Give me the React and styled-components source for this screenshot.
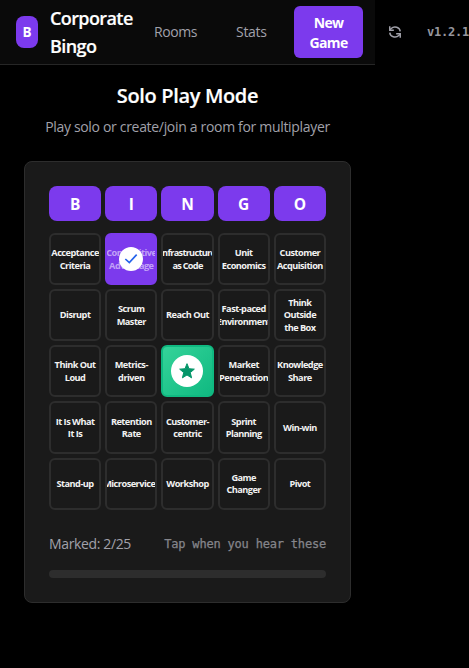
import React from 'react';
import styled, { createGlobalStyle, css } from 'styled-components';

const GlobalStyle = createGlobalStyle`
  *, *::before, *::after { box-sizing: border-box; }
  body {
    margin: 0;
    background: #000;
    color: #fff;
    font-family: "Open Sans", "Noto Sans", sans-serif;
    overflow: hidden;
  }
  button { font: inherit; color: inherit; border: 0; padding: 0; margin: 0; cursor: pointer; }
  h1, p { margin: 0; }
`;

const Page = styled.div`
  width: 375px;
  min-height: 668px;
  background: #000;
`;

const Header = styled.header`
  width: 375px;
  height: 65px;
  padding-left: 16px;
  background: #0a0a0a;
  border-bottom: 1px solid #262626;
`;

const HeaderRow = styled.div`
  display: flex;
  align-items: center;
  width: 453px;
  height: 64px;
`;

const Logo = styled.div`
  display: flex;
  align-items: center;
  justify-content: center;
  flex: none;
  width: 22px;
  height: 32px;
  margin-right: 12px;
  border-radius: 8px;
  background: #7c3aed;
  font-size: 13.5px;
  font-weight: 700;
`;

const Brand = styled.span`
  flex: none;
  width: 88px;
  font-size: 18px;
  line-height: 28px;
  font-weight: 600;
  letter-spacing: -0.6px;
  -webkit-text-stroke: 0.2px #fff;
`;

const Nav = styled.nav`
  display: flex;
  align-items: center;
  flex: none;
`;

const NavLink = styled.span`
  width: ${({ $width }) => $width}px;
  padding-left: 16px;
  color: #a1a1aa;
  font-size: 14px;
  line-height: 20px;
  letter-spacing: ${({ $spacing }) => $spacing}px;
`;

const NewGame = styled.button`
  flex: none;
  width: 69px;
  height: 52px;
  padding-top: 1px;
  border-radius: 6px;
  background: #7c3aed;
  color: #fff;
  font-size: 14px;
  line-height: 20px;
  font-weight: 700;
  white-space: pre-line;
  letter-spacing: -0.65px;
`;

const Refresh = styled.button`
  display: flex;
  flex: none;
  margin-left: 25px;
  background: none;
  color: #a1a1aa;
`;

const Version = styled.span`
  flex: none;
  margin-left: 25px;
  color: #96969e;
  font: 700 12px/16px "DejaVu Sans Mono", monospace;
  letter-spacing: -0.2px;
`;

const Main = styled.main`
  padding: 15px 24px 0;
`;

const Intro = styled.div`
  text-align: center;
  margin-bottom: 24px;
`;

const Title = styled.h1`
  font-size: 20px;
  line-height: 32px;
  font-weight: 600;
  letter-spacing: -0.35px;
  -webkit-text-stroke: 0.2px #fff;
`;

const Subtitle = styled.p`
  margin-top: 5px;
  color: #a1a1aa;
  font-size: 14px;
  line-height: 20px;
  letter-spacing: -0.32px;
`;

const Card = styled.section`
  width: 327px;
  height: 442px;
  padding: 24px;
  border: 1px solid #2d2d2d;
  border-radius: 8px;
  background: #1a1a1a;
`;

const Grid = styled.div`
  display: grid;
  grid-template-columns: repeat(5, 1fr);
  gap: 4px;
`;

const Letters = styled(Grid)`
  margin-bottom: 11.8px;
`;

const Letter = styled.div`
  display: flex;
  align-items: center;
  justify-content: center;
  height: 35px;
  border-radius: 8px;
  background: #7c3aed;
  font-size: 15.5px;
  font-weight: 700;
`;

const cellVariants = {
  plain: css`
    background: #1a1a1a;
    border-color: #2d2d2d;
    color: #f2f2f2;
  `,
  marked: css`
    background: #7c3aed;
    border-color: #7c3aed;
    color: #c2a1f7;
  `,
  free: css`
    background: linear-gradient(135deg, #34d399, #10b981);
    border-color: #10b981;
  `,
};

const Cell = styled.button`
  position: relative;
  display: flex;
  align-items: center;
  justify-content: center;
  min-width: 0;
  height: 52.2px;
  overflow: hidden;
  border-radius: 6px;
  && { border-width: 2px; border-style: solid; }
  ${({ $variant }) => cellVariants[$variant]}
`;

const CellText = styled.span`
  flex: none;
  padding-top: 1.4px;
  text-align: center;
  white-space: pre;
  font-size: 9.2px;
  line-height: 12.6px;
  font-weight: 700;
  letter-spacing: ${({ $tight }) => ($tight ? -0.72 : -0.52)}px;
`;

const Badge = styled.span`
  position: absolute;
  inset: 0;
  margin: auto;
  display: flex;
  align-items: center;
  justify-content: center;
  width: ${({ $size }) => $size}px;
  height: ${({ $size }) => $size}px;
  border-radius: 50%;
  background: #fff;
`;

const Status = styled.div`
  display: flex;
  align-items: center;
  justify-content: space-between;
  margin-top: 24.2px;
  height: 20px;
  color: #a1a1aa;
  font-size: 14px;
  line-height: 20px;
  letter-spacing: -0.36px;
`;

const Hint = styled.span`
  color: #85858b;
  font: 400 12px/16px "DejaVu Sans Mono", monospace;
  letter-spacing: -0.19px;
  -webkit-text-stroke: 0.25px #85858b;
`;

const Track = styled.div`
  height: 8px;
  margin-top: 16px;
  border-radius: 4px;
  background: #2d2d2d;
`;

const cells = [
  'Acceptance\nCriteria', 'Competitive\nAdvantage', 'Infrastructure\nas Code', 'Unit\nEconomics', 'Customer\nAcquisition',
  'Disrupt', 'Scrum\nMaster', 'Reach Out', 'Fast-paced\nEnvironment', 'Think\nOutside\nthe Box',
  'Think Out\nLoud', 'Metrics-\ndriven', 'FREE', 'Market\nPenetration', 'Knowledge\nShare',
  'It Is What\nIt Is', 'Retention\nRate', 'Customer-\ncentric', 'Sprint\nPlanning', 'Win-win',
  'Stand-up', 'Microservices', 'Workshop', 'Game\nChanger', 'Pivot',
];

function RefreshIcon() {
  return (
    <svg width="14" height="14" viewBox="0 0 24 24" fill="none" stroke="currentColor" strokeWidth="2.5">
      <path d="M21 11a9 8.5 0 0 0-15.5-5L3 8.5" />
      <path d="M3 2v7h7" />
      <path d="M3 13a9 8.5 0 0 0 15.5 5L21 15.5" />
      <path d="M14 15h7v7" />
    </svg>
  );
}

function CheckIcon() {
  return (
    <svg width="16" height="16" viewBox="0 0 24 24" fill="none" stroke="#2563eb" strokeWidth="2.5">
      <path d="M20.5 5.5 9.5 17.5l-6-5.5" />
    </svg>
  );
}

function StarIcon() {
  return (
    <svg width="16" height="16" viewBox="0 0 24 24" fill="#059669" stroke="#059669" strokeWidth="1.5" strokeLinejoin="round">
      <path d="M12 1l3 7.6 8 .6-6.100 5.200 2 7.900L12 18l-6.900 4.300 2-7.900L1 9.200l8-.6z" />
    </svg>
  );
}

function BingoCell({ label, index }) {
  if (index === 12) {
    return (
      <Cell $variant="free" aria-label="Free space">
        <Badge $size={32}><StarIcon /></Badge>
      </Cell>
    );
  }
  const marked = index === 1;
  const tight = label.split('\n').some((line) => line.length > 13);
  return (
    <Cell $variant={marked ? 'marked' : 'plain'}>
      <CellText $tight={tight}>{label}</CellText>
      {marked && <Badge $size={24}><CheckIcon /></Badge>}
    </Cell>
  );
}

export default function App() {
  return (
    <>
      <GlobalStyle />
      <Page>
        <Header>
          <HeaderRow>
            <Logo>B</Logo>
            <Brand>Corporate Bingo</Brand>
            <Nav>
              <NavLink $width={82} $spacing={-0.4}>Rooms</NavLink>
              <NavLink $width={74} $spacing={-0.3}>Stats</NavLink>
              <NewGame>{'New\nGame'}</NewGame>
              <Refresh aria-label="Refresh"><RefreshIcon /></Refresh>
              <Version>v1.2.1</Version>
            </Nav>
          </HeaderRow>
        </Header>
        <Main>
          <Intro>
            <Title>Solo Play Mode</Title>
            <Subtitle>Play solo or create/join a room for multiplayer</Subtitle>
          </Intro>
          <Card>
            <Letters>
              {['B', 'I', 'N', 'G', 'O'].map((l) => <Letter key={l}>{l}</Letter>)}
            </Letters>
            <Grid>
              {cells.map((label, i) => <BingoCell key={label} label={label} index={i} />)}
            </Grid>
            <Status>
              <span>Marked: 2/25</span>
              <Hint>Tap when you hear these</Hint>
            </Status>
            <Track />
          </Card>
        </Main>
      </Page>
    </>
  );
}
